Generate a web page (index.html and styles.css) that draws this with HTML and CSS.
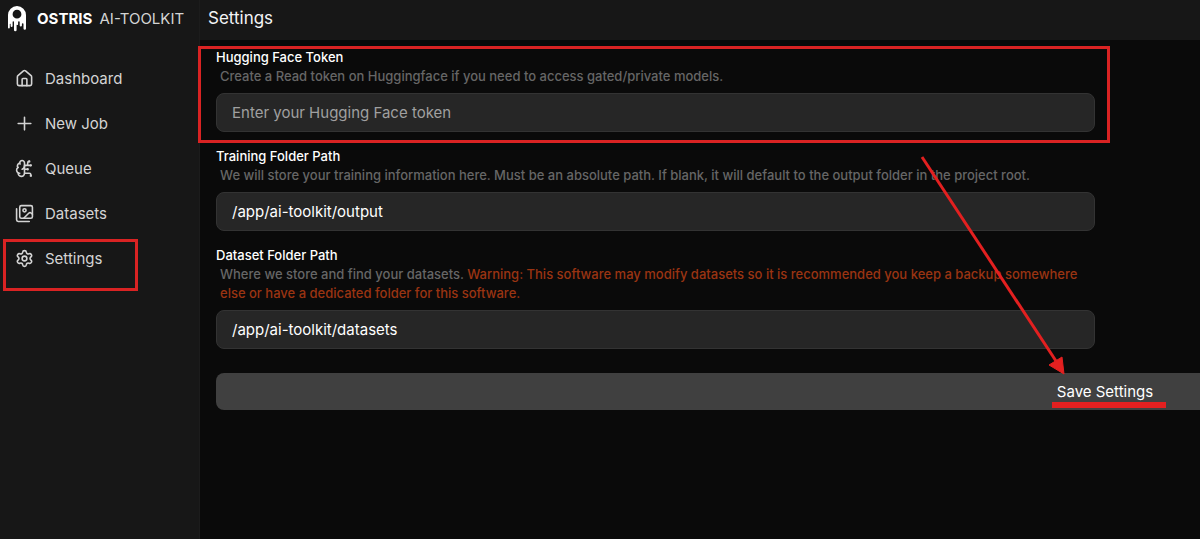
FILE: index.html
```
<!DOCTYPE html>
<html lang="en">
<head>
    <meta charset="UTF-8">
    <meta name="viewport" content="width=device-width, initial-scale=1.0">
    <title>Settings - Ostris AI-Toolkit</title>
    <link rel="stylesheet" href="styles.css">
</head>
<body>
    <div class="app">
        <aside class="sidebar">
            <a class="brand" href="#">
                <svg class="brand-logo" viewBox="0 0 20 27">
                    <path fill="currentColor" fill-rule="evenodd" d="M1 10a9 9 0 0 1 18 0v13.500a1 1 0 0 1-2.500 0V19a.8.8 0 0 0-1.600 0v1.500a1.100 1.100 0 0 1-2.200 0V17a.8.8 0 0 0-1.600 0v2a.7.7 0 0 1-1.500.500V25a1.300 1.300 0 0 1-2.600 0v-8a.7.7 0 0 0-1.400 0v4a1 1 0 0 1-2 0v-2a.5.5 0 0 0-.8 0v3.500a.9.9 0 0 1-1.800 0zM10 4.800a4.400 4.400 0 1 0 0 8.800 4.400 4.400 0 0 0 0-8.800z"/>
                </svg>
                <span class="brand-name"><strong>OSTRIS</strong> <span class="brand-product">AI-TOOLKIT</span></span>
            </a>
            <nav class="nav">
                <a class="nav-item" href="#">
                    <svg class="icon" viewBox="0 0 24 24">
                        <path d="M15 21v-8a1 1 0 0 0-1-1h-4a1 1 0 0 0-1 1v8"/>
                        <path d="M3 10a2 2 0 0 1 .709-1.528l7-5.999a2 2 0 0 1 2.582 0l7 5.999A2 2 0 0 1 21 10v9a2 2 0 0 1-2 2H5a2 2 0 0 1-2-2z"/>
                    </svg>
                    Dashboard
                </a>
                <a class="nav-item" href="#">
                    <svg class="icon" viewBox="0 0 24 24">
                        <path d="M4 12h16M12 4v16"/>
                    </svg>
                    New Job
                </a>
                <a class="nav-item" href="#">
                    <svg class="icon" viewBox="0 0 24 24">
                        <path d="M12 5a3 3 0 1 0-5.997.125 4 4 0 0 0-2.526 5.770 4 4 0 0 0 .556 6.588A4 4 0 1 0 12 18Z"/>
                        <path d="M9 13a4.500 4.500 0 0 0 3-4"/>
                        <path d="M6.003 5.125A3 3 0 0 0 6.401 6.500"/>
                        <path d="M3.477 10.896a4 4 0 0 1 .585-.396"/>
                        <path d="M6 18a4 4 0 0 1-1.967-.516"/>
                        <path d="M12 13h4M12 18h6a2 2 0 0 1 2 2v1M12 8h8M16 8V5a2 2 0 0 1 2-2"/>
                        <circle cx="16" cy="13" r=".5"/>
                        <circle cx="18" cy="3" r=".5"/>
                        <circle cx="20" cy="21" r=".5"/>
                        <circle cx="20" cy="8" r=".5"/>
                    </svg>
                    Queue
                </a>
                <a class="nav-item" href="#">
                    <svg class="icon" viewBox="0 0 24 24">
                        <path d="M18 22H4a2 2 0 0 1-2-2V6"/>
                        <path d="m22 13-1.296-1.296a2.410 2.410 0 0 0-3.408 0L11 18"/>
                        <circle cx="12" cy="8" r="2"/>
                        <rect x="6" y="2" width="16" height="16" rx="2"/>
                    </svg>
                    Datasets
                </a>
                <a class="nav-item highlighted" href="#">
                    <svg class="icon" viewBox="0 0 24 24">
                        <path d="M9.671 4.136a2.340 2.340 0 0 1 4.659 0 2.340 2.340 0 0 0 3.319 1.915 2.340 2.340 0 0 1 2.330 4.033 2.340 2.340 0 0 0 0 3.831 2.340 2.340 0 0 1-2.330 4.033 2.340 2.340 0 0 0-3.319 1.915 2.340 2.340 0 0 1-4.659 0 2.340 2.340 0 0 0-3.320-1.915 2.340 2.340 0 0 1-2.330-4.033 2.340 2.340 0 0 0 0-3.831A2.340 2.340 0 0 1 6.350 6.051a2.340 2.340 0 0 0 3.319-1.915"/>
                        <circle cx="12" cy="12" r="3"/>
                    </svg>
                    Settings
                </a>
            </nav>
        </aside>

        <main class="main">
            <header class="topbar">
                <h1>Settings</h1>
            </header>
            <form class="settings-form">
                <div class="fields">
                    <div class="field highlighted">
                        <label for="hfToken">Hugging Face Token</label>
                        <p class="hint">Create a Read token on Huggingface if you need to access gated/private models.</p>
                        <input type="text" id="hfToken" name="hfToken" placeholder="Enter your Hugging Face token">
                    </div>
                    <div class="field">
                        <label for="trainingFolder">Training Folder Path</label>
                        <p class="hint">We will store your training information here. Must be an absolute path. If blank, it will default to the output folder in the project root.</p>
                        <input type="text" id="trainingFolder" name="trainingFolder" value="/app/ai-toolkit/output">
                    </div>
                    <div class="field">
                        <label for="datasetsFolder">Dataset Folder Path</label>
                        <p class="hint">Where we store and find your datasets. <span class="warning">Warning: This software may modify datasets so it is recommended you keep a backup somewhere else or have a dedicated folder for this software.</span></p>
                        <input type="text" id="datasetsFolder" name="datasetsFolder" value="/app/ai-toolkit/datasets">
                    </div>
                </div>
                <button type="button" class="save-button">
                    <span class="save-label">Save Settings
                        <svg class="arrow" viewBox="0 0 144 220">
                            <path d="M2 2 136 206" fill="none" stroke="currentColor" stroke-width="3"/>
                            <path d="M144 219 129 210 142 202z" fill="currentColor" stroke="currentColor"/>
                        </svg>
                    </span>
                </button>
            </form>
        </main>
    </div>
</body>
</html>
```
FILE: styles.css
```
* {
    box-sizing: border-box;
}
body {
    margin: 0;
    font-family: Inter, sans-serif;
    font-size: 15px;
    color: #f3f4f6;
    background-color: #0a0a0a;
}
.app {
    display: flex;
    min-height: 100vh;
    overflow: hidden;
}

/* sidebar */
.sidebar {
    flex: 0 0 200px;
    background-color: #171717;
    border-right: 1px solid #1c1c1c;
}
.brand {
    display: flex;
    align-items: center;
    gap: 10px;
    height: 37px;
    padding-left: 7px;
    color: #fff;
    text-decoration: none;
}
.brand-logo {
    width: 20px;
    height: 27px;
}
.brand-name {
    white-space: nowrap;
}
.brand-name strong {
    font-weight: 700;
    margin-right: 3px;
}
.brand-product {
    color: #d4d4d4;
}
.nav {
    padding-top: 19px;
}
.nav-item {
    position: relative;
    display: flex;
    align-items: center;
    gap: 11px;
    height: 45px;
    padding-left: 15px;
    color: #d4d4d4;
    text-decoration: none;
}
.icon {
    width: 19px;
    height: 19px;
    fill: none;
    stroke: currentColor;
    stroke-width: 2;
    stroke-linecap: round;
    stroke-linejoin: round;
}

/* main area */
.main {
    flex: 1;
    min-width: 0;
}
.topbar {
    display: flex;
    align-items: center;
    height: 40px;
    padding: 0 8px 5px;
    background-color: #171717;
}
.topbar h1 {
    margin: 0;
    font-size: 17px;
    font-weight: 400;
}
.settings-form {
    width: 181%;
    padding: 8px 16px;
}
.fields {
    display: flex;
    flex-direction: column;
    gap: 15px;
    width: 50%;
    padding-right: 10px;
}
.field {
    position: relative;
}
.field label {
    display: block;
    font-size: 13px;
    font-weight: 500;
    line-height: 19px;
    color: #fff;
}
.hint {
    margin: 0 0 7px;
    padding-left: 4px;
    font-size: 13px;
    font-weight: 500;
    line-height: 19px;
    color: #666;
}
.warning {
    color: #9a3412;
}
.field input {
    display: block;
    width: 100%;
    height: 39px;
    padding: 0 15px;
    border: 1px solid #333;
    border-radius: 8px;
    background-color: #262626;
    color: #fff;
    font: inherit;
}
.field input::placeholder {
    color: #a0a0a0;
}
.save-button {
    width: 100%;
    height: 37px;
    margin-top: 24px;
    border: none;
    border-radius: 8px;
    background-color: #404040;
    color: #fff;
    font: inherit;
}

/* red guide marks */
.highlighted::after {
    content: "";
    position: absolute;
    border: 3px solid #d92323;
    pointer-events: none;
}
.nav-item.highlighted::after {
    inset: 3px 61px -10px 3px;
}
.field.highlighted::after {
    inset: -2px -15px -11px -18px;
}
.save-label {
    position: relative;
}
.save-label::after {
    content: "";
    position: absolute;
    left: -5px;
    right: -13px;
    bottom: -7px;
    height: 6px;
    background-color: #e32020;
}
.arrow {
    position: absolute;
    right: 89px;
    bottom: 26px;
    width: 144px;
    height: 220px;
    overflow: visible;
    color: #e32020;
    pointer-events: none;
}
```
